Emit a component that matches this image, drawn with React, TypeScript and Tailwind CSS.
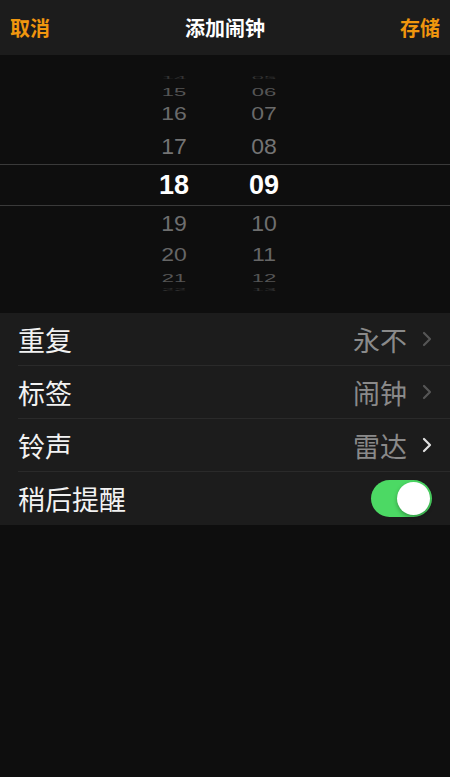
import React from "react";

const font = { fontFamily: '"Noto Sans CJK SC", "Noto Sans", sans-serif' };
const numFont = { fontFamily: '"Liberation Sans", Arial, sans-serif' };

type Slot = { h: number; hr: string; mn: string; size: number; sy: number; color: string; sel?: boolean; weight?: number };

const slots: Slot[] = [
  { h: 10, hr: "14", mn: "05", size: 22, sy: 0.2, color: "#333333" },
  { h: 17, hr: "15", mn: "06", size: 22, sy: 0.5, color: "#555555" },
  { h: 29, hr: "16", mn: "07", size: 23, sy: 0.78, color: "#6a6a6a" },
  { h: 35, hr: "17", mn: "08", size: 23, sy: 0.95, color: "#747474" },
  { h: 42, hr: "18", mn: "09", size: 27, sy: 1, color: "#ffffff", sel: true, weight: 700 },
  { h: 35, hr: "19", mn: "10", size: 23, sy: 0.95, color: "#6e6e6e" },
  { h: 29, hr: "20", mn: "11", size: 23, sy: 0.78, color: "#666666" },
  { h: 16, hr: "21", mn: "12", size: 22, sy: 0.5, color: "#555555" },
  { h: 8, hr: "22", mn: "13", size: 22, sy: 0.2, color: "#333333" },
];

function Chevron({ color }: { color: string }) {
  return (
    <svg width="10" height="16" viewBox="0 0 10 16" className="ml-[15px]">
      <polyline points="2,2 8,8 2,14" fill="none" stroke={color} strokeWidth="2.2" strokeLinecap="round" strokeLinejoin="round" />
    </svg>
  );
}

function Row({ label, value, chevColor, last, children }: { label: string; value?: string; chevColor?: string; last?: boolean; children?: React.ReactNode }) {
  return (
    <div className="pl-[18px]">
      <div className={`flex h-[53px] items-center pr-[18px] ${last ? "" : "border-b border-[#2a2a2a]"}`}>
        <span className="text-[27px] leading-none text-[#f2f2f2]">{label}</span>
        <div className="ml-auto flex items-center">
          {value && <span className="text-[27px] leading-none text-[#8a8a8a]">{value}</span>}
          {chevColor && <Chevron color={chevColor} />}
          {children}
        </div>
      </div>
    </div>
  );
}

export default function App() {
  return (
    <div className="flex h-[777px] w-[450px] flex-col bg-[#0e0e0e]" style={font}>
      <div className="flex h-[55px] items-center justify-between bg-[#1c1c1c] px-[10px]">
        <span className="text-[20px] font-bold text-[#f0960e]">取消</span>
        <span className="text-[20px] font-bold text-white">添加闹钟</span>
        <span className="text-[20px] font-bold text-[#f0960e]">存储</span>
      </div>
      <div className="flex h-[258px] flex-col pt-[18px]" style={numFont}>
        {slots.map((s) => (
          <div
            key={s.hr}
            className={`flex items-center overflow-hidden pl-[144px] ${s.sel ? "border-y border-[#3a3a3a]" : ""}`}
            style={{ height: s.h }}
          >
            {[s.hr, s.mn].map((t, i) => (
              <div key={i} className={`flex w-[60px] justify-center ${i === 1 ? "ml-[30px]" : ""}`}>
                <span
                  className="leading-none"
                  style={{ fontSize: s.size, color: s.color, fontWeight: s.weight ?? 400, transform: `scaleY(${s.sy})`, display: "inline-block" }}
                >
                  {t}
                </span>
              </div>
            ))}
          </div>
        ))}
      </div>
      <div className="bg-[#1c1c1c]">
        <Row label="重复" value="永不" chevColor="#555555" />
        <Row label="标签" value="闹钟" chevColor="#555555" />
        <Row label="铃声" value="雷达" chevColor="#e0e0e0" />
        <Row label="稍后提醒" last>
          <div className="relative h-[37px] w-[61px] rounded-full bg-[#4cd964]">
            <div className="absolute right-[2px] top-[2px] h-[33px] w-[33px] rounded-full bg-white shadow-[0_2px_4px_rgba(0,0,0,0.3)]" />
          </div>
        </Row>
      </div>
    </div>
  );
}
